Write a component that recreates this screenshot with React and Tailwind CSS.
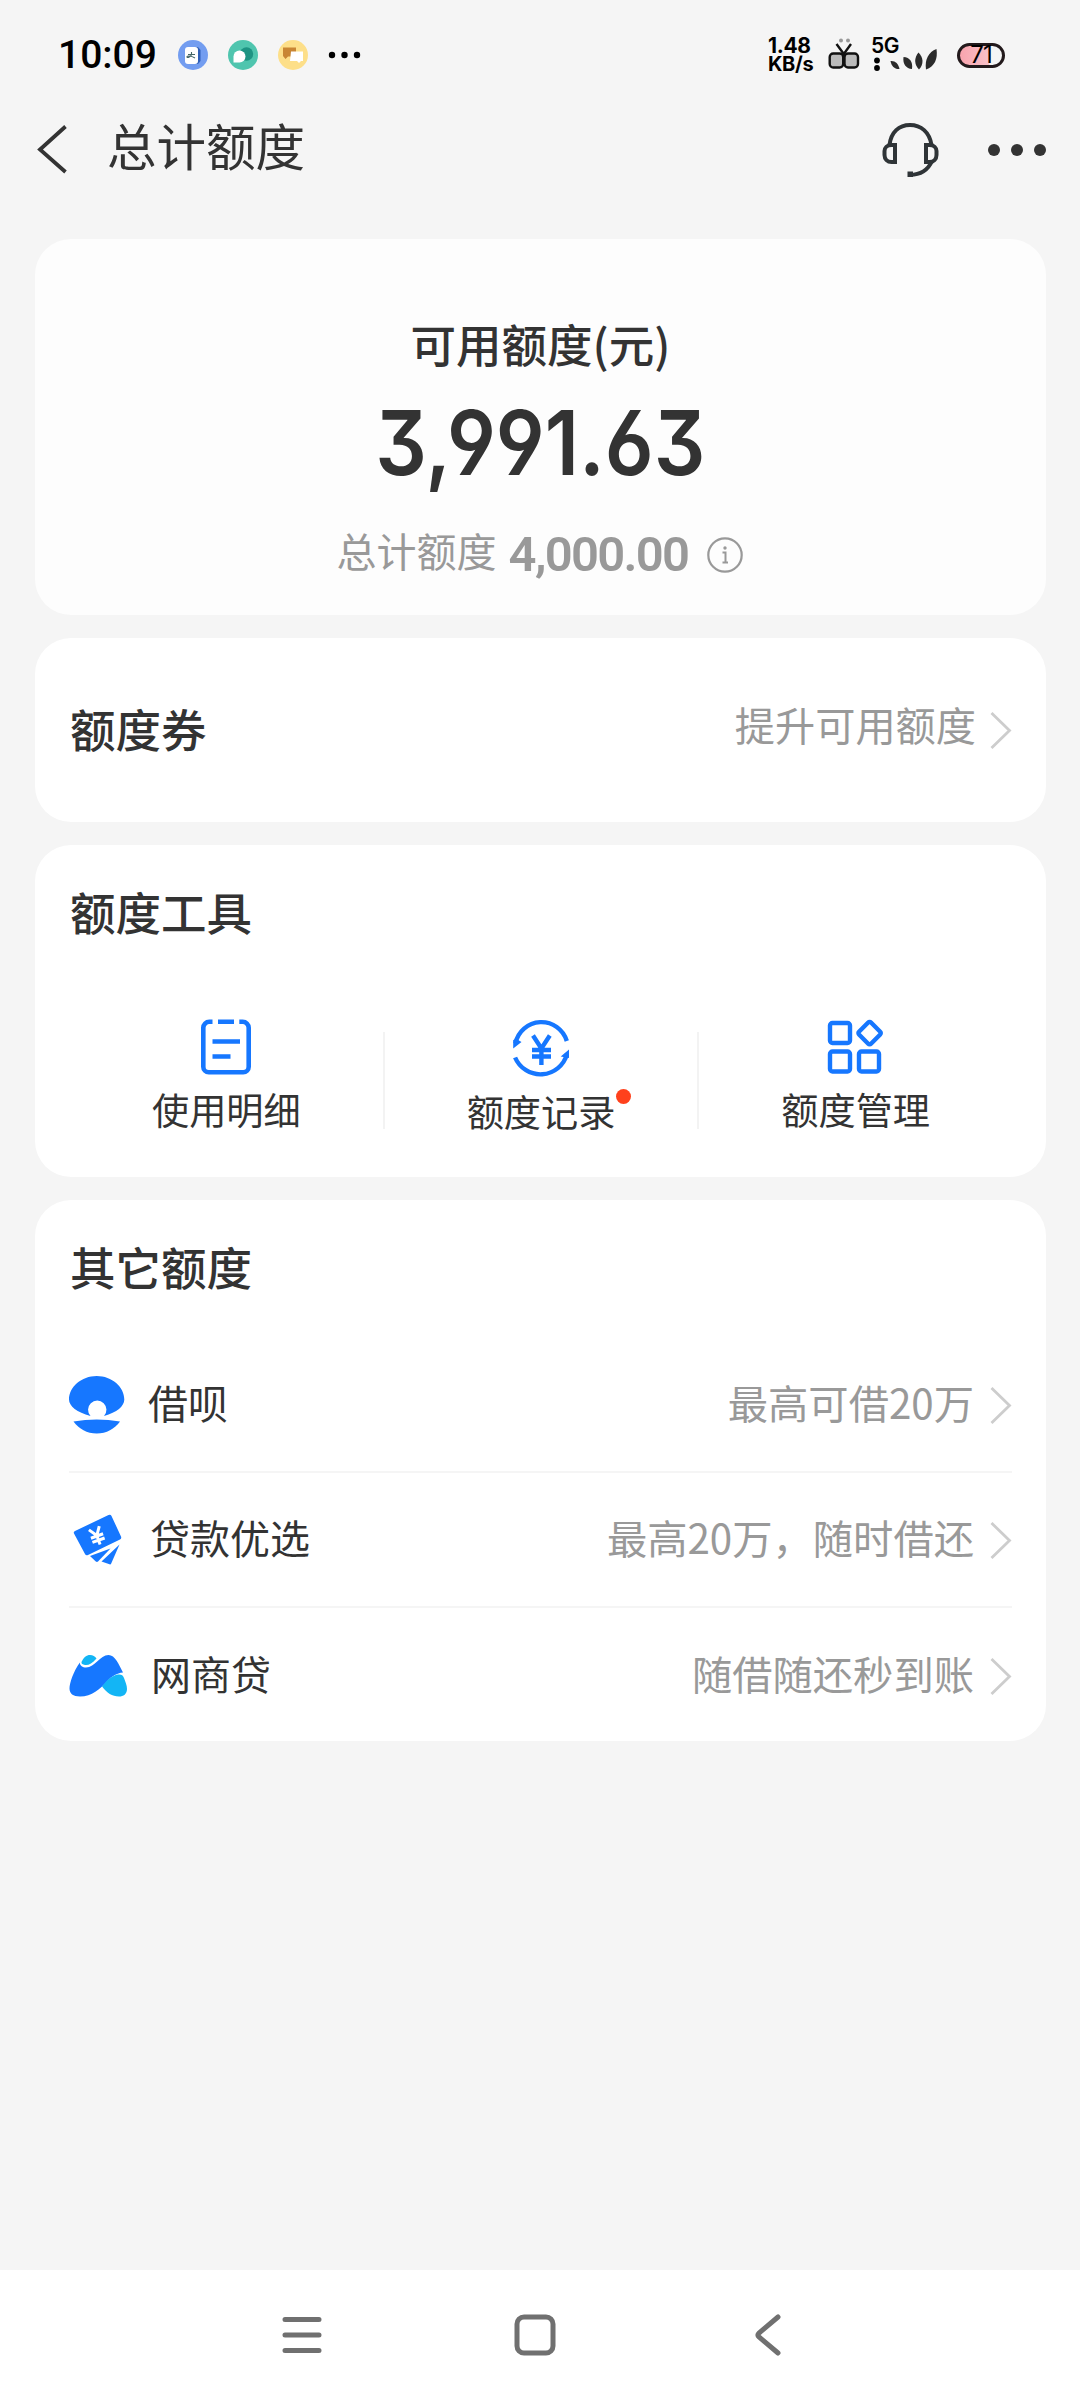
const tools = [
  { label: "使用明细", icon: <BillIcon /> },
  { label: "额度记录", icon: <RecordIcon />, dot: true },
  { label: "额度管理", icon: <ManageIcon /> },
];

const loans = [
  { name: "借呗", desc: "最高可借20万", icon: <JiebeiIcon />, gap: "pl-[23px]" },
  { name: "贷款优选", desc: "最高20万，随时借还", icon: <LoanIcon />, gap: "pl-[23px]" },
  { name: "网商贷", desc: "随借随还秒到账", icon: <BankIcon />, gap: "pl-[23px]" },
];

function BillIcon() {
  return (
    <svg className="w-[60px] h-[60px]" viewBox="0 0 60 60" fill="none" stroke="#1677ff" strokeWidth="4.6">
      <path d="M16.5 4.8h-3.2a6 6 0 0 0-6 6v39a5.5 5.5 0 0 0 5.5 5.5h34.4a5.5 5.5 0 0 0 5.5-5.5v-39a6 6 0 0 0-6-6h-3.4" />
      <path d="M22 4.8h16M16.5 24.5h27.5M16.5 39.5h18" />
    </svg>
  );
}

function RecordIcon() {
  return (
    <svg className="w-[60px] h-[60px]" viewBox="0 0 60 60" fill="none" stroke="#1677ff" strokeWidth="4.4">
      <path d="M4.400 26.500A26.500 26.500 0 0 1 55.800 24" />
      <path d="M4.100 40.500A27.500 27.500 0 0 0 56 37" />
      <path d="M2.200 23v8.500l8.300-6.500-5-3zM58 32.500v8.500l-8.300-1.500z" fill="#1677ff" stroke="none" />
      <path d="M22 18.500l8.400 13 8.400-13M21 33h19M21 39.500h19M30.400 31v17" strokeWidth="4.400" />
    </svg>
  );
}

function ManageIcon() {
  return (
    <svg className="w-[60px] h-[60px]" viewBox="0 0 60 60" fill="none" stroke="#1677ff" strokeWidth="4.4">
      <rect x="4" y="6" width="20" height="20" rx="2.5" />
      <rect x="4" y="34.5" width="20" height="20" rx="2.5" />
      <rect x="33" y="34.5" width="20" height="20" rx="2.5" />
      <rect x="35.1" y="7.6" width="17" height="17" rx="2" transform="rotate(45 43.6 16.1)" />
    </svg>
  );
}

function JiebeiIcon() {
  return (
    <svg className="w-[56px] h-[60px]" viewBox="0 0 56 60" fill="#1677ff">
      <path d="M21.5 41C8 37.5 0 31 0 24.5 0 12 12.5 1 27.7 1S55.3 12 55.3 24.5c0 6.5-7.3 13-20.3 16.5a9.2 9.2 0 1 0-13.5 0z" />
      <path d="M4.5 46.5q23.2-4 46.5 0C45.5 54 37.5 58.5 27.7 58.5S10 54 4.5 46.500z" />
    </svg>
  );
}

function LoanIcon() {
  return (
    <svg className="w-[58px] h-[60px]" viewBox="0 0 58 60" fill="#1677ff">
      <path d="M6 21 39.500 5q2-1 3 1l9.500 20.500q.800 2-1 3L19 45q-2 1-3-1L5 23.500q-.800-1.700 1-2.500z" />
      <path d="M21 46l20.500-7.500-12.500 13q-1 .800-2.200 0z" />
      <path d="M50.500 34.500l-18 17 8 2.800q1.200.400 1.700-.800z" />
      <g transform="rotate(-20 28 26)" fill="none" stroke="#fff" strokeWidth="3">
        <path d="M22.500 17.500l5.500 8 5.500-8M21.500 26h13M21.500 30.500h13M28 25v10" />
      </g>
    </svg>
  );
}

function BankIcon() {
  return (
    <svg className="w-[59px] h-[60px]" viewBox="0 0 59 60">
      <path d="M12.500 16C14.500 11.500 17.500 9 21 9c3 0 5 1.300 6.500 3.500-4.500 5-8 7-11.500 6.500-2.500-.500-3.800-1-3.500-3z" fill="#13b5f5" />
      <path d="M10.800 16.500C4.500 25.500.500 37 .500 42.500c0 5 3.500 8 10.500 8 12 0 20-7.500 27-15 5-5.500 9.500-8.300 16-9C50 18.500 46 9 39.500 9 31 9 26 21.500 17 21.500c-3.500 0-6-1.500-6.200-5z" fill="#1677ff" />
      <path d="M33 40.500c5-6.500 10-11 16-12 3-.500 5 .500 6 3.500 1.500 4 3 7.500 3 11 0 5-3.500 7.500-8 7.500-7 0-12-3.500-17-10z" fill="#13b5f5" />
    </svg>
  );
}

function Chevron() {
  return (
    <svg className="w-[22px] h-[38px]" viewBox="0 0 22 38" fill="none" stroke="#cdcdcd" strokeWidth="2.8">
      <path d="M1.5 2 19.5 19.5 1.5 37" />
    </svg>
  );
}

const StatusBar = () => (
  <div className="h-[110px] pl-[58px] pr-[75px] flex items-center justify-between text-black">
    <div className="flex items-center">
      <span className="w-[100px] text-[39px] leading-none font-medium font-['Roboto',sans-serif] whitespace-nowrap">10:09</span>
      <svg className="ml-[18px] w-[190px] h-[32px]" viewBox="0 0 190 32">
        {/* notification badges */}
        <circle cx="17" cy="16" r="15" fill="#739df0" />
        <path d="M13 8h9l2.500 3v11l-2.500 3h-9z" fill="#2f5fb8" />
        <rect x="9" y="8" width="13" height="17" rx="3" fill="#fff" />
        <path d="M12 15.500h7M15.500 13v2.500c-.500 2-4 4-4.500 2.500s4-1.500 8 1" fill="none" stroke="#466" strokeWidth="1.100" />
        <circle cx="67" cy="16" r="15" fill="#4fc5ae" />
        <circle cx="70.500" cy="15" r="6.700" fill="#1e9483" />
        <path d="M57.500 23.500V17.500a6 6 0 1 1 6 6z" fill="#fff" />
        <circle cx="117" cy="16" r="15" fill="#fddf89" />
        <path d="M107 8.500h13v9h-8l-2.500 2.500-2.500-3z" fill="#c98634" />
        <path d="M115 12.500h12v9.500h-2l-2 2-2-2h-7z" fill="#fff" />
        <circle cx="156" cy="16" r="3.200" />
        <circle cx="168.500" cy="16" r="3.200" />
        <circle cx="181" cy="16" r="3.200" />
      </svg>
    </div>
    <div className="flex items-center">
      <div className="w-[51px] flex flex-col font-bold font-['Inter',sans-serif] tracking-[-0.3px]">
        <span className="text-[21px] leading-[18px]">1.48</span>
        <span className="text-[20px] leading-[18px]">KB/s</span>
      </div>
      <svg className="ml-[9px] w-[34px] h-[34px]" viewBox="0 0 34 34">
        <circle cx="13" cy="2.500" r="2" fill="#999" />
        <circle cx="20" cy="2.500" r="2" fill="#999" />
        <rect x="1.700" y="15.500" width="13.500" height="14" rx="3.500" fill="#bbb" stroke="#111" strokeWidth="2.400" />
        <rect x="16.500" y="15.500" width="13.500" height="14" rx="3.500" fill="#bbb" stroke="#111" strokeWidth="2.400" />
        <path d="M8.500 6l7.300 10 7.200-10M15.800 14v5" fill="none" stroke="#111" strokeWidth="2.400" />
      </svg>
      <div className="relative ml-[9px] w-[68px] h-[36px]">
        <span className="absolute left-0 top-0 text-[21px] leading-[18px] font-semibold font-['Inter',sans-serif] tracking-[-0.5px]">5G</span>
        <svg className="w-[68px] h-[36px]" viewBox="0 0 68 36">
          <circle cx="6" cy="23.500" r="2.900" />
          <circle cx="6" cy="31" r="2.900" />
          <g fill="#2b2b2b">
            <path d="M19.500 24c4.500-.500 8 2.500 9 8-4.500.500-8-2.500-9-8z" />
            <path d="M32.500 20c6.500.500 9.500 5 8.500 12-6-.500-9.500-5-8.500-12z" />
            <path d="M47.500 15.500c5 5 5.500 11.500.500 17-5-5-5-11.500-.500-17z" />
            <path d="M65.500 12c1.500 10-2 17.500-10.500 20.500-1.500-10 2.500-17.500 10.500-20.500z" />
          </g>
        </svg>
      </div>
      <div className="ml-[18px] w-[48px] h-[25px] rounded-full border-[3px] border-[#231a1c] bg-linear-to-r from-[#f9a4ae] from-0% via-[#f8c0c7] via-68% to-[#f5f5f5] to-72% flex items-center justify-center">
        <span className="text-[24px] leading-none font-['Inter',sans-serif] tracking-[-1px]">71</span>
      </div>
    </div>
  </div>
);

const Header = () => (
  <div className="h-[78px] pl-[36px] pr-[31px] flex items-center text-[#333]">
    <svg className="w-[32px] h-[50px]" viewBox="0 0 32 50" fill="none" stroke="#333" strokeWidth="3.8">
      <path d="M29.5 2.5 4 25.5l25.5 22.5" />
    </svg>
    <h1 className="ml-[39px] mb-[8px] text-[49.5px] leading-[60px]">总计额度</h1>
    <svg className="ml-auto mb-[2px] w-[60px] h-[60px]" viewBox="0 0 60 60" fill="none" stroke="#2f3437" strokeWidth="4">
      <path d="M9.500 27C11 14 19 7 30 7s19.500 7 21.500 20" />
      <path d="M15 27h-3.500C7 27 4.500 30 4.500 33v4c0 4 3 7 7 7H15z" />
      <path d="M46 27h3.500c4.500 0 7 3 7 6v4c0 4-3 7-7 7H46z" />
      <path d="M52 43C48 52 41 56.800 30 56.800" />
      <rect x="27.500" y="53.500" width="5.500" height="5.500" fill="#2f3437" stroke="none" />
    </svg>
    <svg className="ml-[45px] w-[64px] h-[16px]" viewBox="0 0 64 16" fill="#333">
      <circle cx="9" cy="9" r="6" />
      <circle cx="32" cy="9" r="6" />
      <circle cx="55" cy="9" r="6" />
    </svg>
  </div>
);

const App = () => {
  return (
    <div className="w-[1080px] h-[2400px] bg-[#f5f5f5] flex flex-col overflow-hidden font-['Noto_Sans_CJK_SC',sans-serif] text-[#333]">
      <StatusBar />
      <Header />

      <main className="flex-1 pt-[51px] pl-[35px] pr-[34px] flex flex-col gap-[23px]">
        {/* available quota */}
        <section className="h-[376px] pt-[74px] rounded-[36px] bg-[#fdfdfd] flex flex-col items-center">
          <h2 className="text-[45.5px] leading-[60px] font-medium">可用额度(元)</h2>
          <p className="mt-[20px] text-[89px] leading-[100px] font-semibold font-['Inter',sans-serif] scale-x-[0.91] [font-feature-settings:'ss01','cv03','cv04']">
            3,991.63
          </p>
          <div className="mt-[27px] h-[60px] flex items-center text-[#999]">
            <span className="text-[40px] leading-[60px]">总计额度</span>
            <span className="ml-[12px] mt-[9px] text-[49px] leading-[60px] font-semibold font-['Roboto',sans-serif] tracking-[-1.7px]">4,000.00</span>
            <svg className="ml-[18px] mt-[9px] w-[38px] h-[38px]" viewBox="0 0 38 38" fill="none" stroke="#999" strokeWidth="2.2">
              <circle cx="19" cy="19" r="16.7" />
              <path d="M16.5 16.5h3V26.5M16.5 26.5h5.5" strokeWidth="2" />
              <circle cx="19" cy="12" r="1.7" fill="#999" stroke="none" />
            </svg>
          </div>
        </section>

        <section className="h-[184px] pl-[35px] pr-[34px] rounded-[36px] bg-white flex items-center">
          <h2 className="mb-[4px] text-[45.5px] leading-[60px] font-medium">额度券</h2>
          <span className="ml-auto mb-[12px] text-[40.2px] leading-[60px] text-[#999]">提升可用额度</span>
          <span className="ml-[14px]"><Chevron /></span>
        </section>

        <section className="h-[332px] pt-[36px] pl-[35px] pr-[32px] rounded-[36px] bg-white">
          <h2 className="text-[45.5px] leading-[60px] font-medium">额度工具</h2>
          <div className="mt-[76px] flex">
            {tools.map((tool) => (
              <div key={tool.label} className="group flex-1 flex relative">
                <div className="flex-1 flex flex-col items-center">
                  {tool.icon}
                  <span className={tool.dot ? "mt-[9px] text-[37.2px] leading-[50px]" : "mt-[7px] text-[37.2px] leading-[50px]"}>
                    {tool.label}
                  </span>
                </div>
                <div className="mt-[15px] w-[2px] h-[97px] bg-[#f3f3f3] group-last:bg-transparent" />
                {tool.dot && <span className="absolute left-[231px] top-[72px] size-[15px] rounded-full bg-[#ff411c]" />}
              </div>
            ))}
          </div>
        </section>

        <section className="h-[541px] pt-[36px] px-[34px] rounded-[36px] bg-white">
          <h2 className="pl-[1px] text-[45.5px] leading-[60px] font-medium">其它额度</h2>
          <div className="mt-[42px] divide-y-2 divide-[#f5f5f5]">
            {loans.map((loan) => (
              <div key={loan.name} className="h-[135px] flex items-center">
                {loan.icon}
                <span className={`${loan.gap} mb-[5px] text-[40px] leading-[60px]`}>{loan.name}</span>
                <span className="ml-auto mb-[5px] text-[40.3px] leading-[60px] text-[#999]">{loan.desc}</span>
                <span className="ml-[16px]"><Chevron /></span>
              </div>
            ))}
          </div>
        </section>
      </main>

      {/* system navigation */}
      <nav className="h-[130px] bg-white flex items-center">
        <svg className="ml-[280px] w-[44px] h-[44px]" viewBox="0 0 44 44" stroke="#707070" strokeWidth="5" strokeLinecap="round">
          <path d="M5 6.5h34M5 22h34M5 37.5h34" />
        </svg>
        <svg className="ml-[189px] w-[44px] h-[44px]" viewBox="0 0 44 44" fill="none" stroke="#707070" strokeWidth="5">
          <rect x="4" y="4" width="36" height="36" rx="7" />
        </svg>
        <svg className="ml-[194px] w-[34px] h-[44px]" viewBox="0 0 34 44" fill="none" stroke="#707070" strokeWidth="5" strokeLinecap="round">
          <path d="M27 4 8 20q-2 2 0 4l19 16" />
        </svg>
      </nav>
    </div>
  );
};

export default App;
